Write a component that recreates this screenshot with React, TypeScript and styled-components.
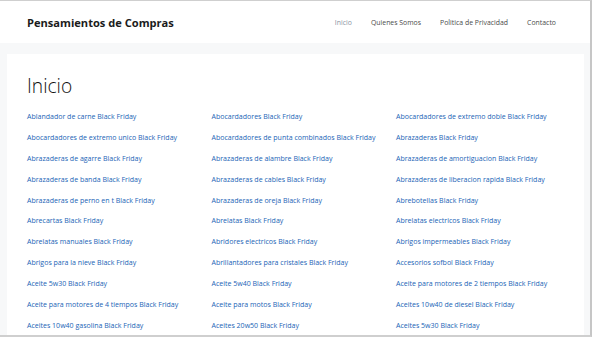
import React from "react";
import styled, { createGlobalStyle } from "styled-components";

const Global = createGlobalStyle`
  html, body { margin: 0; padding: 0; }
  body { font-family: "Open Sans", "Noto Sans", sans-serif; background: #f7f8f9; }
  * { box-sizing: border-box; }
`;

const Frame = styled.div`
  width: 592px;
  height: 337px;
  overflow: hidden;
  background: #f7f8f9;
  border-top: 1px solid #cfcfcf;
  border-right: 2px solid #c6c6c6;
  border-bottom: 2px solid #cfcfcf;
  display: flex;
  flex-direction: column;
`;

const Header = styled.header`
  height: 42px;
  flex: none;
  background: #ffffff;
  display: flex;
  align-items: center;
  justify-content: space-between;
  padding: 0 34px 0 27px;
`;

const Brand = styled.div`
  font-size: 11.1px;
  font-weight: 700;
  color: #1b1b1b;
`;

const Nav = styled.nav`
  display: flex;
  gap: 19px;
`;

const NavItem = styled.a<{ $active?: boolean }>`
  font-size: 6.9px;
  color: ${(p) => (p.$active ? "#8a93a3" : "#4a4a4a")};
  text-decoration: none;
`;

const Main = styled.main`
  flex: 1;
  padding: 11px 6px 0 7px;
  display: flex;
`;

const Card = styled.section`
  flex: 1;
  background: #ffffff;
  padding: 18px 0 0 20px;
`;

const Title = styled.h1`
  margin: 0 0 10px;
  font-size: 19.2px;
  font-weight: 300;
  color: #111111;
  line-height: 28px;
`;

const Grid = styled.div`
  display: grid;
  grid-template-columns: repeat(3, 184.5px);
  grid-auto-rows: 20.9px;
`;

const Link = styled.a`
  font-size: 7.02px;
  font-weight: 500;
  color: #1a64b6;
  text-decoration: none;
  line-height: 12px;
  white-space: nowrap;
`;

const links = [
  "Ablandador de carne Black Friday",
  "Abocardadores Black Friday",
  "Abocardadores de extremo doble Black Friday",
  "Abocardadores de extremo unico Black Friday",
  "Abocardadores de punta combinados Black Friday",
  "Abrazaderas Black Friday",
  "Abrazaderas de agarre Black Friday",
  "Abrazaderas de alambre Black Friday",
  "Abrazaderas de amortiguacion Black Friday",
  "Abrazaderas de banda Black Friday",
  "Abrazaderas de cables Black Friday",
  "Abrazaderas de liberacion rapida Black Friday",
  "Abrazaderas de perno en t Black Friday",
  "Abrazaderas de oreja Black Friday",
  "Abrebotellas Black Friday",
  "Abrecartas Black Friday",
  "Abrelatas Black Friday",
  "Abrelatas electricos Black Friday",
  "Abrelatas manuales Black Friday",
  "Abridores electricos Black Friday",
  "Abrigos impermeables Black Friday",
  "Abrigos para la nieve Black Friday",
  "Abrillantadores para cristales Black Friday",
  "Accesorios sofbol Black Friday",
  "Aceite 5w30 Black Friday",
  "Aceite 5w40 Black Friday",
  "Aceite para motores de 2 tiempos Black Friday",
  "Aceite para motores de 4 tiempos Black Friday",
  "Aceite para motos Black Friday",
  "Aceites 10w40 de diesel Black Friday",
  "Aceites 10w40 gasolina Black Friday",
  "Aceites 20w50 Black Friday",
  "Aceites 5w30 Black Friday",
];

export default function App() {
  return (
    <>
      <Global />
      <Frame>
        <Header>
          <Brand>Pensamientos de Compras</Brand>
          <Nav>
            <NavItem $active>Inicio</NavItem>
            <NavItem>Quienes Somos</NavItem>
            <NavItem>Politica de Privacidad</NavItem>
            <NavItem>Contacto</NavItem>
          </Nav>
        </Header>
        <Main>
          <Card>
            <Title>Inicio</Title>
            <Grid>
              {links.map((l) => (
                <Link key={l}>{l}</Link>
              ))}
            </Grid>
          </Card>
        </Main>
      </Frame>
    </>
  );
}
